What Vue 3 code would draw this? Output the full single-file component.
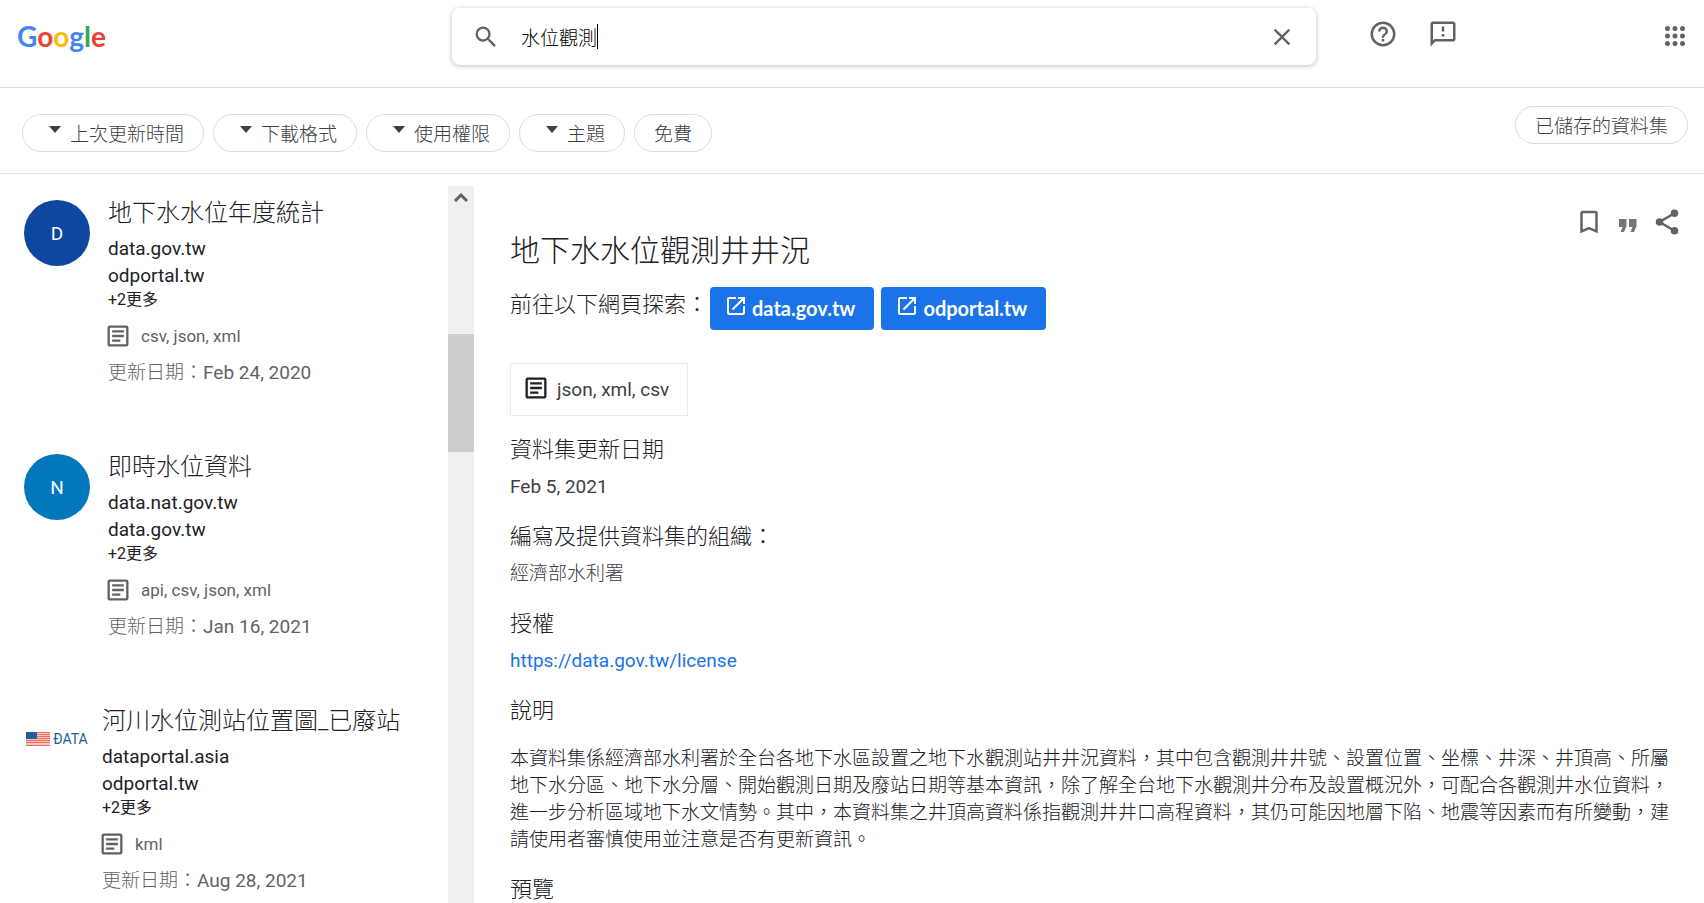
<script setup>
import { ref } from 'vue'

const query = ref('水位觀測')
const logo = [
  ['G', 'blue'],
  ['o', 'red'],
  ['o', 'yellow'],
  ['g', 'blue'],
  ['l', 'green'],
  ['e', 'red'],
]
const filters = ['上次更新時間', '下載格式', '使用權限', '主題']
const results = [
  {
    title: '地下水水位年度統計',
    letter: 'D',
    tone: 'navy',
    sites: ['data.gov.tw', 'odportal.tw'],
    formats: 'csv, json, xml',
    date: 'Feb 24, 2020',
  },
  {
    title: '即時水位資料',
    letter: 'N',
    tone: 'azure',
    sites: ['data.nat.gov.tw', 'data.gov.tw'],
    formats: 'api, csv, json, xml',
    date: 'Jan 16, 2021',
  },
  {
    title: '河川水位測站位置圖_已廢站',
    sites: ['dataportal.asia', 'odportal.tw'],
    formats: 'kml',
    date: 'Aug 28, 2021',
  },
]
const sources = ['data.gov.tw', 'odportal.tw']
const description =
  '本資料集係經濟部水利署於全台各地下水區設置之地下水觀測站井井況資料，其中包含觀測井井號、設置位置、坐標、井深、井頂高、所屬地下水分區、地下水分層、開始觀測日期及廢站日期等基本資訊，除了解全台地下水觀測井分布及設置概況外，可配合各觀測井水位資料，進一步分析區域地下水文情勢。其中，本資料集之井頂高資料係指觀測井井口高程資料，其仍可能因地層下陷、地震等因素而有所變動，建請使用者審慎使用並注意是否有更新資訊。'
</script>

<template>
  <div class="page" lang="zh-Hant">
    <header class="top">
      <a class="logo" href="#"><span v-for="(l, i) in logo" :key="i" :class="l[1]">{{ l[0] }}</span></a>
      <form class="search" role="search" @submit.prevent>
        <button class="icon-btn" type="submit" aria-label="搜尋">
          <svg width="28" height="28" viewBox="0 0 24 24"><path d="M15.5 14h-.79l-.28-.27A6.47 6.47 0 0 0 16 9.5 6.5 6.5 0 1 0 9.5 16c1.61 0 3.09-.59 4.23-1.57l.27.28v.79l5 4.99L20.49 19l-4.99-5zm-6 0a4.5 4.5 0 1 1 0-9 4.5 4.5 0 0 1 0 9z" /></svg>
        </button>
        <label class="field">
          <input v-model="query" type="text" aria-label="搜尋資料集" />
          <span class="caret"></span>
        </label>
        <button class="icon-btn" type="button" aria-label="清除" @click="query = ''">
          <svg width="28" height="28" viewBox="0 0 24 24"><path d="M19 6.41 17.59 5 12 10.59 6.41 5 5 6.41 10.59 12 5 17.59 6.41 19 12 13.41 17.59 19 19 17.59 13.41 12z" /></svg>
        </button>
      </form>
      <div class="help">
        <button class="icon-btn" aria-label="說明">
          <svg width="30" height="30" viewBox="0 0 24 24"><path d="M11 18h2v-2h-2v2zm1-16a10 10 0 1 0 0 20 10 10 0 0 0 0-20zm0 18a8 8 0 1 1 0-16 8 8 0 0 1 0 16zm0-14a4 4 0 0 0-4 4h2a2 2 0 1 1 4 0c0 2-3 1.75-3 5h2c0-2.25 3-2.5 3-5a4 4 0 0 0-4-4z" /></svg>
        </button>
        <button class="icon-btn" aria-label="提供意見">
          <svg width="30" height="30" viewBox="0 0 24 24"><path d="M20 2H4c-1.1 0-2 .9-2 2v18l4-4h14c1.1 0 2-.9 2-2V4c0-1.1-.9-2-2-2zm0 14H5.2L4 17.2V4h16v12zM11 12h2v2h-2zm0-6h2v4h-2z" /></svg>
        </button>
      </div>
      <button class="icon-btn apps" aria-label="應用程式">
        <svg width="30" height="30" viewBox="0 0 24 24"><path d="M6 8a2 2 0 1 0 0-4 2 2 0 0 0 0 4zm6 0a2 2 0 1 0 0-4 2 2 0 0 0 0 4zm6 0a2 2 0 1 0 0-4 2 2 0 0 0 0 4zM6 14a2 2 0 1 0 0-4 2 2 0 0 0 0 4zm6 0a2 2 0 1 0 0-4 2 2 0 0 0 0 4zm6 0a2 2 0 1 0 0-4 2 2 0 0 0 0 4zM6 20a2 2 0 1 0 0-4 2 2 0 0 0 0 4zm6 0a2 2 0 1 0 0-4 2 2 0 0 0 0 4zm6 0a2 2 0 1 0 0-4 2 2 0 0 0 0 4z" /></svg>
      </button>
    </header>

    <nav class="filters">
      <button v-for="f in filters" :key="f" class="chip drop">
        <svg width="12" height="12" viewBox="0 0 12 12"><path d="M0 0h12L6 7z" /></svg>{{ f }}
      </button>
      <button class="chip">免費</button>
      <button class="chip saved">已儲存的資料集</button>
    </nav>

    <main class="body">
      <ul class="results">
        <li v-for="r in results" :key="r.title" class="result" :class="{ branded: !r.letter }">
          <span v-if="r.letter" class="avatar" :class="r.tone">{{ r.letter }}</span>
          <span v-else class="brand">
            <svg width="24" height="14" viewBox="0 0 24 14">
              <path fill="#f8c9c2" d="M0 0h24v14H0z" />
              <path stroke="#ee6a5b" stroke-width="1" d="M0 .5h24M0 2.5h24M0 4.5h24M0 6.5h24M0 8.5h24M0 10.5h24M0 13.5h24" />
              <path fill="#205e97" d="M0 0h11v7H0z" />
            </svg>ÐATA
          </span>
          <div class="info">
            <h2>{{ r.title }}</h2>
            <div v-for="s in r.sites" :key="s" class="site">{{ s }}</div>
            <div class="more">+2更多</div>
            <div class="formats">
              <svg width="28" height="28" viewBox="0 0 24 24"><path d="M19 5v14H5V5h14m0-2H5a2 2 0 0 0-2 2v14c0 1.1.9 2 2 2h14a2 2 0 0 0 2-2V5a2 2 0 0 0-2-2zM14 17H7v-2h7v2zm3-4H7v-2h10v2zm0-4H7V7h10v2z" /></svg>{{ r.formats }}
            </div>
            <div class="date"><span class="thin">更新日期：</span>{{ r.date }}</div>
          </div>
        </li>
      </ul>

      <div class="scrollbar" aria-hidden="true">
        <svg width="14" height="10" viewBox="0 0 14 10"><path d="M1 8l6-6 6 6" fill="none" stroke="#606060" stroke-width="3" /></svg>
        <div class="thumb"></div>
      </div>

      <article class="detail">
        <div class="actions">
          <button class="icon-btn" aria-label="儲存">
            <svg width="30" height="30" viewBox="0 0 24 24"><path d="M17 3H7a2 2 0 0 0-2 2v16l7-3 7 3V5a2 2 0 0 0-2-2zm0 15-5-2.18L7 18V5h10v13z" /></svg>
          </button>
          <button class="icon-btn quote" aria-label="引用">
            <svg width="18" height="13" viewBox="0 0 18 13"><path d="M0 0h7.500v7L5 13H1.500l2-5H0zM10 0h7.500v7L15 13h-3.500l2-5H10z" /></svg>
          </button>
          <button class="icon-btn" aria-label="分享">
            <svg width="30" height="30" viewBox="0 0 24 24"><path stroke="currentColor" stroke-width="2" d="M18 5 6 12l12 7" fill="none" /><circle cx="18" cy="5" r="3" /><circle cx="6" cy="12" r="3" /><circle cx="18" cy="19" r="3" /></svg>
          </button>
        </div>
        <h1>地下水水位觀測井井況</h1>
        <div class="explore">
          <span class="lead">前往以下網頁探索：</span>
          <div class="sources">
            <a v-for="s in sources" :key="s" class="source" href="#">
              <svg width="24" height="24" viewBox="0 0 24 24"><path d="M19 19H5V5h7V3H5a2 2 0 0 0-2 2v14a2 2 0 0 0 2 2h14c1.1 0 2-.9 2-2v-7h-2v7zM14 3v2h3.590l-9.830 9.830 1.410 1.410L19 6.410V10h2V3h-7z" /></svg>{{ s }}
            </a>
          </div>
        </div>
        <div class="format-card">
          <svg width="28" height="28" viewBox="0 0 24 24"><path d="M19 5v14H5V5h14m0-2H5a2 2 0 0 0-2 2v14c0 1.1.9 2 2 2h14a2 2 0 0 0 2-2V5a2 2 0 0 0-2-2zM14 17H7v-2h7v2zm3-4H7v-2h10v2zm0-4H7V7h10v2z" /></svg>json, xml, csv
        </div>
        <section>
          <h3>資料集更新日期</h3>
          <p>Feb 5, 2021</p>
        </section>
        <section>
          <h3>編寫及提供資料集的組織：</h3>
          <p class="thin">經濟部水利署</p>
        </section>
        <section>
          <h3>授權</h3>
          <p><a href="https://data.gov.tw/license">https://data.gov.tw/license</a></p>
        </section>
        <section>
          <h3>說明</h3>
          <p class="long thin">{{ description }}</p>
        </section>
        <section>
          <h3>預覽</h3>
        </section>
      </article>
    </main>
  </div>
</template>

<style>
body {
  margin: 0;
  background: #fff;
}
</style>

<style scoped>
.page {
  display: flex;
  flex-direction: column;
  height: 100vh;
  overflow: hidden;
  color: #202124;
  font-family: Roboto, "Noto Sans CJK TC", sans-serif;
  font-size: 19px;
  font-weight: 400;
}
.page * {
  box-sizing: border-box;
}
button {
  font: inherit;
  color: inherit;
}
svg {
  display: block;
  flex: none;
  fill: currentColor;
}
.top {
  display: flex;
  flex: none;
  align-items: flex-start;
  height: 88px;
  padding: 8px 14px 0 17px;
  border-bottom: 1px solid #e0e0e0;
}
.logo {
  width: 435px;
  flex: none;
  padding-top: 8px;
  font-family: Lato, sans-serif;
  font-size: 28px;
  font-weight: 700;
  line-height: 40px;
  text-decoration: none;
}
.blue { color: #4285f4; }
.red { color: #ea4335; }
.yellow { color: #fbbc05; }
.green { color: #34a853; }
.search {
  display: flex;
  flex: 0 1 864px;
  align-items: center;
  height: 57px;
  padding: 0 20px;
  border-radius: 8px;
  box-shadow: 0 1px 5px rgba(32, 33, 36, 0.3);
}
.icon-btn {
  display: block;
  padding: 0;
  border: 0;
  background: none;
  color: #5f6368;
}
.field {
  display: flex;
  flex: 1;
  align-items: center;
  padding-left: 21px;
}
.field input {
  field-sizing: content;
  padding: 0;
  border: 0;
  outline: 0;
  background: none;
  color: #000;
  font: inherit;
  font-weight: 300;
}
.caret {
  width: 1px;
  height: 25px;
  background: #000;
}
.help {
  display: flex;
  gap: 30px;
  padding: 11px 0 0 52px;
}
.apps {
  margin: 13px 0 0 auto;
}
.filters {
  display: flex;
  flex: none;
  gap: 9px;
  height: 86px;
  padding: 26px 16px 0 22px;
  border-bottom: 1px solid #e0e0e0;
}
.chip {
  display: flex;
  align-items: center;
  height: 38px;
  padding: 0 19px 2px;
  border: 1px solid #dadce0;
  border-radius: 19px;
  background: #fff;
  color: #3c4043;
  font-weight: 300;
  white-space: nowrap;
}
.drop {
  gap: 9px;
  padding-left: 26px;
}
.saved {
  margin: -8px 0 0 auto;
}
.body {
  display: flex;
  flex: 1;
  min-height: 0;
}
.results {
  display: flex;
  flex: 0 0 448px;
  flex-direction: column;
  gap: 65px;
  margin: 0;
  padding: 22px 0 0 24px;
  overflow: hidden;
  list-style: none;
}
.result {
  display: flex;
  gap: 18px;
}
.branded {
  gap: 12px;
}
.avatar {
  display: flex;
  flex: none;
  align-items: center;
  justify-content: center;
  width: 66px;
  height: 66px;
  margin-top: 4px;
  border-radius: 50%;
  color: #fff;
}
.navy { background: #0d47a1; }
.azure { background: #0277bd; }
.brand {
  display: flex;
  flex: none;
  align-items: center;
  justify-content: center;
  gap: 3px;
  width: 66px;
  height: 70px;
  color: #205e97;
  font-size: 14px;
}
h1,
h2,
h3,
p {
  margin: 0;
  font-weight: 300;
}
h2 {
  margin-bottom: 5px;
  font-size: 24px;
  line-height: 34px;
  white-space: nowrap;
}
.site {
  line-height: 27px;
}
.more {
  font-size: 16px;
  line-height: 22px;
}
.formats {
  display: flex;
  align-items: center;
  gap: 9px;
  height: 24px;
  margin: 13px 0 13px -4px;
  color: #5f6368;
  font-size: 17px;
}
.date {
  color: #5f6368;
  line-height: 24px;
}
.scrollbar {
  display: flex;
  flex: none;
  flex-direction: column;
  align-items: center;
  width: 26px;
  margin-top: 12px;
  padding-top: 7px;
  background: #f0f0f0;
}
.thumb {
  width: 26px;
  height: 118px;
  margin-top: 131px;
  background: #cdcdcd;
}
.detail {
  position: relative;
  flex: 1;
  min-width: 0;
  padding: 55px 22px 0 36px;
  overflow: hidden;
}
.actions {
  position: absolute;
  top: 33px;
  right: 22px;
  display: flex;
  align-items: center;
  gap: 15px;
}
.quote {
  padding-top: 6px;
  color: #757575;
}
h1 {
  font-size: 30px;
  line-height: 44px;
}
.explore {
  display: flex;
  align-items: flex-start;
  gap: 2px;
  margin-top: 14px;
}
.lead {
  font-size: 22px;
  font-weight: 300;
  line-height: 36px;
}
.sources {
  display: flex;
  gap: 7px;
}
.source {
  display: flex;
  align-items: center;
  gap: 4px;
  height: 43px;
  padding: 0 19px 2px 14px;
  border-radius: 4px;
  background: #1a73e8;
  color: #fff;
  font-family: Lato, sans-serif;
  font-size: 20px;
  font-weight: 700;
  text-decoration: none;
}
.source svg {
  margin-bottom: 4px;
}
.format-card {
  display: flex;
  align-items: center;
  gap: 7px;
  width: max-content;
  height: 53px;
  margin: 33px 0 17px;
  padding: 0 18px 0 11px;
  border: 1px solid #ebebeb;
  color: #3c4043;
}
.format-card svg {
  margin-bottom: 4px;
  color: #202124;
}
section {
  margin-bottom: 20px;
}
h3 {
  font-size: 22px;
  line-height: 34px;
}
p {
  margin-top: 7px;
  color: #3c4043;
  font-weight: 400;
  line-height: 26px;
}
.thin {
  font-weight: 300;
}
p a {
  color: #1a73e8;
  text-decoration: none;
}
.long {
  margin-top: 17px;
  color: #202124;
  line-height: 27px;
}
</style>
